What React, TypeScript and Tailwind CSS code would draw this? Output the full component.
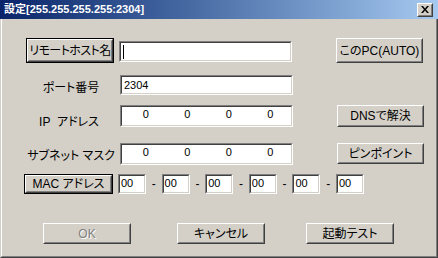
import React from "react";

const font = "font-['Liberation_Sans','Noto_Sans_CJK_JP',sans-serif] [font-feature-settings:'palt']";

function Raised({
  className = "",
  children,
  focused = false,
  disabled = false,
}: {
  className?: string;
  children?: React.ReactNode;
  focused?: boolean;
  disabled?: boolean;
}) {
  const inner = (
    <div className="h-full w-full border border-t-white border-l-white border-b-[#404040] border-r-[#404040]">
      <div
        className={`h-full w-full border border-t-[#d4d0c8] border-l-[#d4d0c8] border-b-[#808080] border-r-[#808080] flex items-center justify-center text-[12px] leading-none whitespace-nowrap ${
          disabled ? "text-[#808080] [text-shadow:1px_1px_0_#fff]" : "text-black"
        }`}
      >
        {children}
      </div>
    </div>
  );
  if (focused) {
    return <div className={`shrink-0 border border-black ${className}`}>{inner}</div>;
  }
  return <div className={`shrink-0 ${className}`}>{inner}</div>;
}

function Sunken({ className = "", children }: { className?: string; children?: React.ReactNode }) {
  return (
    <div
      className={`shrink-0 border border-t-[#808080] border-l-[#808080] border-b-white border-r-white ${className}`}
    >
      <div className="h-full w-full border border-t-[#404040] border-l-[#404040] border-b-[#d4d0c8] border-r-[#d4d0c8] bg-white text-[11px] leading-none text-black">
        {children}
      </div>
    </div>
  );
}

function IpField() {
  return (
    <Sunken className="w-[173px] h-[22px]">
      <div className="grid grid-cols-4 pl-[3px] pt-[2px]">
        <span className="text-center">0</span>
        <span className="text-center">0</span>
        <span className="text-center">0</span>
        <span className="text-center">0</span>
      </div>
    </Sunken>
  );
}

function MacField() {
  return (
    <Sunken className="w-[28px] h-[20px]">
      <div className="pl-[1px] pt-[2px]">00</div>
    </Sunken>
  );
}

function Dash() {
  return <div className="flex-1 flex justify-center pt-[4px] text-[12px] leading-none">-</div>;
}

export default function App() {
  return (
    <div className={`w-[438px] h-[258px] bg-[#d4d0c8] flex flex-col overflow-hidden font-normal text-black ${font}`}>
      {/* title bar */}
      <div className="h-[19px] shrink-0 flex items-center bg-gradient-to-r from-[#0a246a] to-[#a6caf0] pl-[4px] pr-[5px]">
        <span className="text-white text-[11px] font-bold leading-none">設定[255.255.255.255:2304]</span>
        <div className="ml-auto w-[16px] h-[14px] border border-t-white border-l-white border-b-[#404040] border-r-[#404040]">
          <div className="w-full h-full bg-[#d4d0c8] border border-t-[#d4d0c8] border-l-[#d4d0c8] border-b-[#808080] border-r-[#808080] flex items-center justify-center">
            <svg width="8" height="7" viewBox="0 0 8 7">
              <path d="M0 0h2l2 2.5L6 0h2L5 3.5 8 7H6L4 4.5 2 7H0l3-3.5z" fill="#000" />
            </svg>
          </div>
        </div>
      </div>

      {/* body with window frame */}
      <div className="flex-1 border-l border-l-[#d4d0c8] border-r border-r-[#404040] border-b border-b-[#404040]">
        <div className="h-full border-l border-l-white border-r border-r-[#808080] border-b border-b-[#808080] flex flex-col">
          {/* row 1 */}
          <div className="mt-[19px] flex items-start">
            <Raised focused className="ml-[24px] w-[88px] h-[25px]">
              <span className="tracking-[-0.6px]">リモートホスト名</span>
            </Raised>
            <Sunken className="ml-[5px] mt-[3px] w-[173px] h-[21px]">
              <div className="ml-[2px] mt-[2px] w-[1px] h-[14px] bg-black" />
            </Sunken>
            <Raised className="ml-[44px] w-[87px] h-[25px]">このPC(AUTO)</Raised>
          </div>

          {/* row 2 */}
          <div className="mt-[12px] flex items-end">
            <div className="ml-[22px] w-[94px] text-center text-[12px] leading-none pb-[1px]">ポート番号</div>
            <Sunken className="ml-[2px] w-[173px] h-[20px]">
              <div className="pl-[2px] pt-[3px]">2304</div>
            </Sunken>
          </div>

          {/* row 3 */}
          <div className="mt-[10px] flex items-start">
            <div className="ml-[20px] w-[94px] mt-[11px] text-center text-[12px] leading-none whitespace-pre">
              {"IP  アドレス"}
            </div>
            <div className="ml-[4px]">
              <IpField />
            </div>
            <Raised className="ml-[44px] w-[87px] h-[22px]">DNSで解決</Raised>
          </div>

          {/* row 4 */}
          <div className="mt-[15px] flex items-start">
            <div className="ml-[22px] w-[94px] mt-[7px] text-center text-[12px] leading-none whitespace-nowrap">
              サブネット マスク
            </div>
            <div className="ml-[2px]">
              <IpField />
            </div>
            <Raised className="ml-[44px] w-[87px] h-[21px]">ピンポイント</Raised>
          </div>

          {/* row 5 */}
          <div className="mt-[9px] flex items-start">
            <Raised focused className="ml-[22px] w-[89px] h-[20px]">
              MAC アドレス
            </Raised>
            <div className="ml-[5px] w-[246px] flex items-start">
              <MacField />
              <Dash />
              <MacField />
              <Dash />
              <MacField />
              <Dash />
              <MacField />
              <Dash />
              <MacField />
              <Dash />
              <MacField />
            </div>
          </div>

          {/* bottom buttons */}
          <div className="mt-[29px] flex items-start">
            <Raised disabled className="ml-[41px] w-[88px] h-[21px]">
              OK
            </Raised>
            <Raised className="ml-[46px] w-[88px] h-[21px]">キャンセル</Raised>
            <Raised className="ml-[41px] w-[88px] h-[21px]">起動テスト</Raised>
          </div>
        </div>
      </div>
    </div>
  );
}
